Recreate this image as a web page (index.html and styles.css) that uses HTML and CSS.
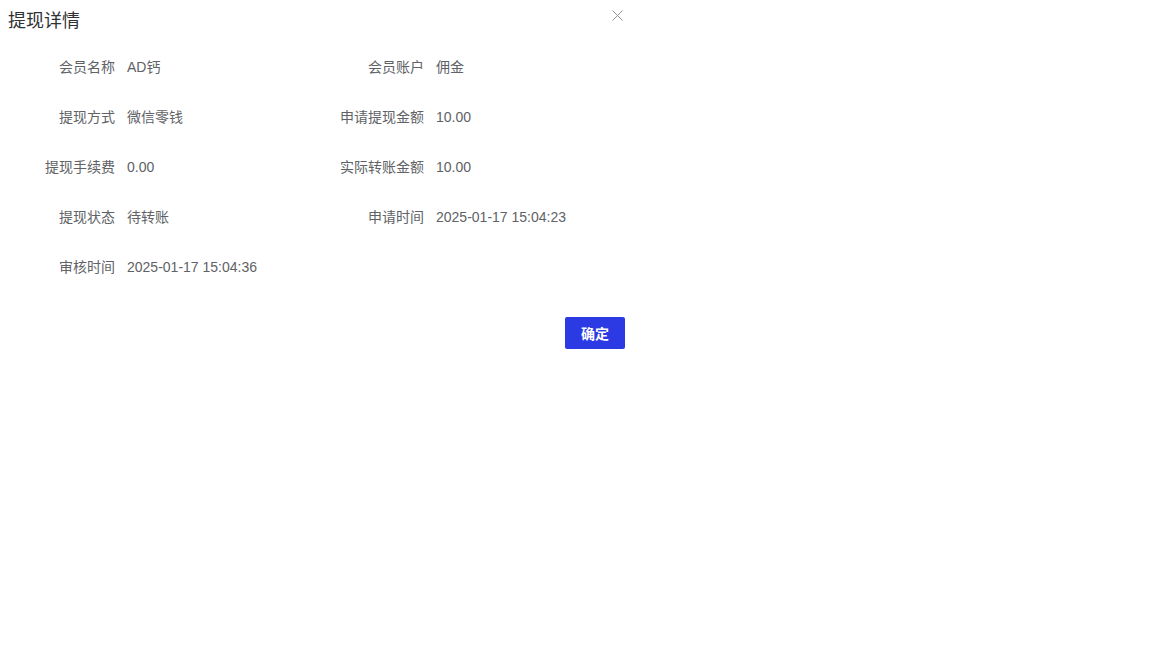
FILE: index.html
```html
<!DOCTYPE html>
<html lang="zh">
<head>
<meta charset="utf-8">
<title>提现详情</title>
<link rel="stylesheet" href="styles.css">
</head>
<body>
<div class="dialog">
  <div class="header">
    <span class="title">提现详情</span>
    <button class="close" aria-label="关闭">
      <svg width="11" height="11" viewBox="0 0 11 11"><path d="M0.5 0.5 L10.5 10.5 M10.5 0.5 L0.5 10.5" stroke="#909399" stroke-width="1" fill="none"/></svg>
    </button>
  </div>
  <div class="grid">
    <div class="item"><span class="label">会员名称</span><span class="value">AD钙</span></div>
    <div class="item"><span class="label">会员账户</span><span class="value">佣金</span></div>
    <div class="item"><span class="label">提现方式</span><span class="value">微信零钱</span></div>
    <div class="item"><span class="label">申请提现金额</span><span class="value">10.00</span></div>
    <div class="item"><span class="label">提现手续费</span><span class="value">0.00</span></div>
    <div class="item"><span class="label">实际转账金额</span><span class="value">10.00</span></div>
    <div class="item"><span class="label">提现状态</span><span class="value">待转账</span></div>
    <div class="item"><span class="label">申请时间</span><span class="value">2025-01-17 15:04:23</span></div>
    <div class="item"><span class="label">审核时间</span><span class="value">2025-01-17 15:04:36</span></div>
  </div>
  <div class="footer">
    <button class="ok">确定</button>
  </div>
</div>
</body>
</html>
```
FILE: styles.css
```css
html, body {
  margin: 0;
  padding: 0;
  background: #fff;
}
body {
  font-family: "Liberation Sans", Arial, "Noto Sans CJK SC", sans-serif;
  font-size: 14px;
}
.dialog {
  position: relative;
  width: 640px;
}
.header {
  height: 42px;
  display: flex;
  align-items: center;
  padding-left: 8px;
}
.title {
  font-size: 18px;
  color: #303133;
  line-height: 24px;
}
.close {
  position: absolute;
  top: 9px;
  left: 611px;
  width: 13px;
  height: 13px;
  padding: 1px;
  border: 0;
  background: transparent;
  display: flex;
  align-items: center;
  justify-content: center;
  cursor: pointer;
}
.grid {
  display: grid;
  grid-template-columns: 309px 309px;
}
.item {
  display: flex;
  align-items: center;
  height: 50px;
}
.label {
  width: 127px;
  box-sizing: border-box;
  padding-right: 12px;
  text-align: right;
  color: #606266;
  line-height: 20px;
}
.value {
  color: #606266;
  line-height: 20px;
}
.footer {
  display: flex;
  justify-content: flex-end;
  padding: 25px 15px 0 0;
}
.ok {
  width: 60px;
  height: 32px;
  border: 0;
  border-radius: 2px;
  background: #2b3ae3;
  color: #fff;
  font-family: "Liberation Sans", Arial, "Noto Sans CJK SC", sans-serif;
  font-size: 14px;
  font-weight: bold;
  padding: 0;
  cursor: pointer;
}
```
